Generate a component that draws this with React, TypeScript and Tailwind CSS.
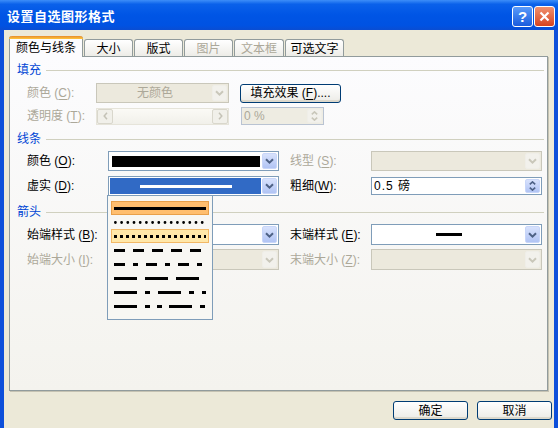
import clsx from "clsx";
import type { ReactNode } from "react";

const LINE_STYLES = [
  { dash: "", mark: "sel" },
  { dash: "round", mark: "" },
  { dash: "3 3", mark: "hot" },
  { dash: "11 8", mark: "" },
  { dash: "11 8 5 8", mark: "" },
  { dash: "23 8", mark: "" },
  { dash: "23 8 5 8", mark: "" },
  { dash: "23 8 5 7 5 7", mark: "" },
];

function Chevron({ off }: { off?: boolean }) {
  return (
    <svg width="9" height="6" viewBox="0 0 9 6">
      <path d="M1 1.2 L4.5 4.6 L8 1.2" fill="none" stroke={off ? "#C9C7BA" : "#4D6185"} strokeWidth="2" />
    </svg>
  );
}

function DropBtn({ off }: { off?: boolean }) {
  return (
    <div
      className={clsx(
        "flex h-full w-[15px] shrink-0 items-center justify-center rounded-[2px] border",
        off ? "border-[#EFEEE8] bg-[#F2F1EC]" : "border-[#C8D6F9] bg-gradient-to-b from-[#D8E2FC] to-[#B1C4F4]"
      )}
    >
      <Chevron off={off} />
    </div>
  );
}

function SpinBtn({ off }: { off?: boolean }) {
  const c = off ? "#C9C7BA" : "#4D6185";
  return (
    <div
      className={clsx(
        "flex h-full w-[15px] shrink-0 flex-col items-center justify-center gap-[2px] rounded-[2px] border",
        off ? "border-[#EFEEE8] bg-[#F2F1EC]" : "border-[#C8D6F9] bg-gradient-to-b from-[#D8E2FC] to-[#B1C4F4]"
      )}
    >
      <svg width="7" height="4" viewBox="0 0 7 4">
        <path d="M0.8 3.4 L3.5 0.9 L6.2 3.4" fill="none" stroke={c} strokeWidth="1.6" />
      </svg>
      <svg width="7" height="4" viewBox="0 0 7 4">
        <path d="M0.8 0.6 L3.5 3.1 L6.2 0.6" fill="none" stroke={c} strokeWidth="1.6" />
      </svg>
    </div>
  );
}

function Combo({ w, off, inner, children }: { w: string; off?: boolean; inner?: string; children?: ReactNode }) {
  return (
    <div
      className={clsx(
        "relative flex h-full shrink-0 border p-[1px]",
        w,
        off ? "border-[#C9C7BA] bg-[#ECE9DD]" : "border-[#7F9DB9] bg-white"
      )}
    >
      <div className={clsx("flex flex-1 items-center justify-center", inner)}>{children}</div>
      <DropBtn off={off} />
    </div>
  );
}

function Label({ name, k, w, off, tight }: { name: string; k: string; w: string; off?: boolean; tight?: boolean }) {
  return (
    <span className={clsx("shrink-0 whitespace-nowrap", w, off ? "text-[#ACA899]" : "text-black")}>
      {name}
      {tight ? "" : " "}(<span className="underline underline-offset-2">{k}</span>):
    </span>
  );
}

function Group({ title }: { title: string }) {
  return (
    <div className="flex h-[14px] items-center gap-[5px] text-[#0046D5]">
      <span>{title}</span>
      <div className="h-px flex-1 bg-[#D0D0BF]" />
    </div>
  );
}

function XPButton({ w, children }: { w: string; children: ReactNode }) {
  return (
    <div
      className={clsx(
        "flex h-[19px] items-center justify-center rounded-[3px] border border-[#003C74] bg-gradient-to-b from-white to-[#ECEBE6] shadow-[inset_0_-2px_0_#DCD8CC]",
        w
      )}
    >
      {children}
    </div>
  );
}

function Tab({ w, off, children }: { w: string; off?: boolean; children: ReactNode }) {
  return (
    <div
      className={clsx(
        "ml-[1px] flex h-[18px] items-center justify-center rounded-t-[3px] border-x border-t border-[#919B9C] bg-gradient-to-b from-white to-[#ECEBE6] first:ml-0",
        w,
        off ? "text-[#ACA899]" : "text-black"
      )}
    >
      {children}
    </div>
  );
}

function LineSample({ dash }: { dash: string }) {
  if (dash === "round") {
    return (
      <svg width="92" height="3">
        <line x1="1.4" y1="1.5" x2="92" y2="1.5" stroke="#000" strokeWidth="2.8" strokeLinecap="round" strokeDasharray="0 6.2" />
      </svg>
    );
  }
  return (
    <svg width="92" height="3">
      <line x1="0" y1="1.5" x2="92" y2="1.5" stroke="#000" strokeWidth="3" strokeDasharray={dash || undefined} />
    </svg>
  );
}

function DashList() {
  return (
    <div className="absolute left-[-1px] top-[19px] z-20 h-[125px] w-[106px] border border-[#7F9DB9] bg-[#F8F7F3] pt-[5px]">
      {LINE_STYLES.map((s, i) => (
        <div
          key={i}
          className={clsx(
            "mx-[3px] flex h-[14px] items-center justify-center",
            s.mark === "sel" && "border border-[#E8A04A] bg-[#FFBE6E]",
            s.mark === "hot" && "border border-[#F2B866] bg-[#FFE7A8]"
          )}
        >
          <LineSample dash={s.dash} />
        </div>
      ))}
    </div>
  );
}

export default function App() {
  return (
    <div className="flex h-[428px] w-[558px] flex-col overflow-hidden bg-[#0D4FDA] font-['Liberation_Sans','Noto_Sans_CJK_SC',sans-serif] text-[12px] leading-none">
      {/* title bar */}
      <div className="flex h-[30px] shrink-0 items-center bg-[linear-gradient(to_bottom,#3D8EF8_0%,#0A61EA_14%,#0055E5_50%,#0052E2_85%,#0A4DD2_100%)] pl-[7px] pr-[3px] pt-[2px]">
        <span className="flex-1 text-[13px] font-bold tracking-[0.5px] text-white">设置自选图形格式</span>
        <div className="flex gap-[1px]">
          <div className="flex h-[21px] w-[21px] items-center justify-center rounded-[3px] border border-white bg-gradient-to-b from-[#5A9BFA] to-[#1A5BDD] text-[15px] font-bold text-white">
            ?
          </div>
          <div className="flex h-[21px] w-[21px] items-center justify-center rounded-[3px] border border-white bg-gradient-to-b from-[#F0906E] to-[#D6421B]">
            <svg width="13" height="13" viewBox="0 0 13 13">
              <path d="M2.5 2.5 L10.5 10.5 M10.5 2.5 L2.5 10.5" stroke="#fff" strokeWidth="2.2" />
            </svg>
          </div>
        </div>
      </div>

      {/* dialog body */}
      <div className="mx-[4px] flex flex-1 flex-col bg-[#ECE9D8] pl-[5px] pt-[6px]">
        <div className="flex h-[21px] items-end">
          <div className="relative z-10 flex h-[21px] w-[74px] flex-col rounded-t-[3px] border-x border-[#919B9C] bg-[#FCFCFE]">
            <div className="-mx-px h-[3px] rounded-t-[3px] bg-gradient-to-b from-[#E68B2C] to-[#FFC73C]" />
            <div className="flex flex-1 items-center justify-center">颜色与线条</div>
          </div>
          <Tab w="w-[49px]">大小</Tab>
          <Tab w="w-[49px]">版式</Tab>
          <Tab w="w-[49px]" off>
            图片
          </Tab>
          <Tab w="w-[50px]" off>
            文本框
          </Tab>
          <Tab w="w-[59px]">可选文字</Tab>
        </div>

        <div className="relative -mt-px h-[335px] w-[539px] border border-[#919B9C] bg-gradient-to-b from-[#FCFCFE] to-[#F4F3EE] pl-[7px] pr-[3px] pt-[6px] shadow-[1px_1px_0_#C5C2B2]">
          <Group title="填充" />

          <div className="mt-[6px] flex h-[20px] items-center pl-[10px]">
            <Label name="颜色" k="C" w="w-[69px]" off />
            <Combo w="w-[133px]" off>
              <span className="text-[#ACA899]">无颜色</span>
            </Combo>
            <XPButton w="ml-[11px] w-[101px]">
              填充效果 (<span className="underline underline-offset-2">F</span>)....
            </XPButton>
          </div>

          <div className="mt-[3px] flex h-[20px] items-center pl-[10px]">
            <Label name="透明度" k="T" w="w-[69px]" off />
            <div className="flex h-[17px] w-[133px] shrink-0 justify-between border border-[#E6E4DA] bg-gradient-to-b from-[#FBFAF6] to-[#F1F0EA]">
              <div className="flex w-[16px] items-center justify-center rounded-[2px] border border-[#D9D7CC] bg-[#F1F0EA]">
                <svg width="5" height="8" viewBox="0 0 5 8">
                  <path d="M4 0.8 L1.2 4 L4 7.2" fill="none" stroke="#C4C2B6" strokeWidth="1.5" />
                </svg>
              </div>
              <div className="flex w-[16px] items-center justify-center rounded-[2px] border border-[#D9D7CC] bg-[#F1F0EA]">
                <svg width="5" height="8" viewBox="0 0 5 8">
                  <path d="M1 0.8 L3.8 4 L1 7.2" fill="none" stroke="#C4C2B6" strokeWidth="1.5" />
                </svg>
              </div>
            </div>
            <div className="ml-[12px] flex h-[18px] w-[83px] shrink-0 border border-[#B9C3D2] bg-[#EEECE2] p-[1px]">
              <span className="flex flex-1 items-center pl-[1px] text-[#ACA899]">0 %</span>
              <SpinBtn off />
            </div>
          </div>

          <div className="mt-[6px]">
            <Group title="线条" />
          </div>

          <div className="mt-[5px] flex h-[20px] items-center pl-[10px]">
            <Label name="颜色" k="O" w="w-[81px]" />
            <Combo w="w-[171px]">
              <div className="mx-[2px] h-[11px] flex-1 bg-black" />
            </Combo>
            <Label name="线型" k="S" w="ml-[11px] w-[81px]" off />
            <Combo w="w-[171px]" off />
          </div>

          <div className="mt-[5px] flex h-[20px] items-center pl-[10px]">
            <Label name="虚实" k="D" w="w-[81px]" />
            <div className="relative h-full">
              <Combo w="w-[171px]" inner="bg-[#316AC5] mr-[1px]">
                <div className="h-[3px] w-[92px] bg-white" />
              </Combo>
              <DashList />
            </div>
            <Label name="粗细" k="W" w="ml-[11px] w-[81px]" tight />
            <div className="flex h-[18px] w-[171px] shrink-0 border border-[#7F9DB9] bg-white p-[1px]">
              <span className="flex flex-1 items-center pl-[1px] tracking-[1px] text-black">0.5 磅</span>
              <SpinBtn />
            </div>
          </div>

          <div className="mt-[9px]">
            <Group title="箭头" />
          </div>

          <div className="mt-[5px] flex h-[21px] items-center pl-[10px]">
            <Label name="始端样式" k="B" w="w-[81px]" />
            <Combo w="w-[171px]" />
            <Label name="末端样式" k="E" w="ml-[11px] w-[81px]" />
            <Combo w="w-[171px]">
              <div className="h-[3px] w-[26px] bg-black" />
            </Combo>
          </div>

          <div className="mt-[4px] flex h-[21px] items-center pl-[10px]">
            <Label name="始端大小" k="I" w="w-[81px]" off />
            <Combo w="w-[171px]" off />
            <Label name="末端大小" k="Z" w="ml-[11px] w-[81px]" off />
            <Combo w="w-[171px]" off />
          </div>
        </div>

        <div className="mt-[10px] flex justify-end gap-[9px] pr-[2px]">
          <XPButton w="w-[75px]">确定</XPButton>
          <XPButton w="w-[75px]">取消</XPButton>
        </div>
      </div>
    </div>
  );
}
